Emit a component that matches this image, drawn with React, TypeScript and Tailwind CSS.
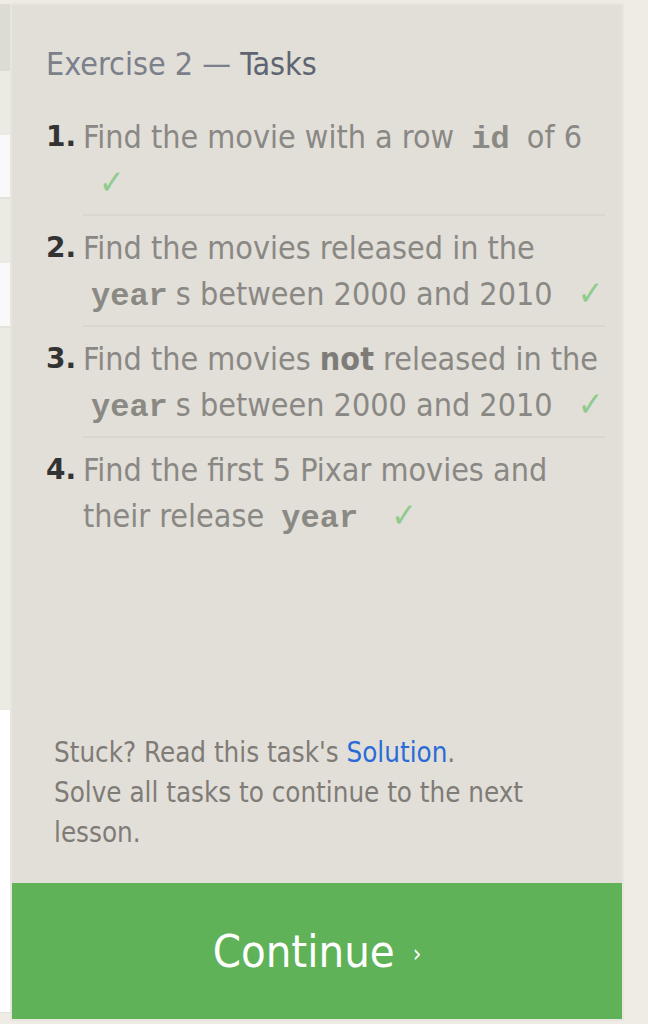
const body = "font-['DejaVu_Sans_Condensed','DejaVu_Sans',sans-serif]";

function Code({ children }: { children: string }) {
  return (
    <code className="px-[8px] font-['Liberation_Mono',monospace] text-[32px] font-bold leading-none text-[#8b8984]">
      {children}
    </code>
  );
}

function Check() {
  return <span className="ml-[16px] text-[34px] leading-none text-[#8fcb8b]">✓</span>;
}

const tasks = [
  <>
    Find the movie with a row <Code>id</Code> of 6 <Check />
  </>,
  <>
    Find the movies released in the <Code>year</Code>s between 2000 and 2010 <Check />
  </>,
  <>
    Find the movies <b className="font-bold text-[#7e7c78]">not</b> released in the <Code>year</Code>s between 2000
    and 2010 <Check />
  </>,
  <>
    Find the first 5 Pixar movies and their release <Code>year</Code> <Check />
  </>,
];

export default function App() {
  return (
    <div className={`flex h-[1024px] w-[648px] overflow-hidden bg-[#efece5] ${body}`}>
      {/* left panel, cut off */}
      <div className="flex w-[10px] shrink-0 flex-col pt-[4px]">
        <div className="h-[67px] bg-[#dcdcd5]" />
        <div className="h-[64px] bg-[#ebebe4]" />
        <div className="h-[64px] border-b-2 border-[#e2e2dc] bg-[#f9f9f9]" />
        <div className="h-[64px] bg-[#ebebe4]" />
        <div className="h-[65px] border-b-2 border-[#e2e2dc] bg-[#f9f9f9]" />
        <div className="h-[382px] bg-[#ebebe4]" />
        <div className="h-[303px] border-b border-[#e2e2dc] bg-white" />
      </div>

      {/* tasks panel */}
      <div className="mt-[3px] flex h-[1018px] w-[614px] shrink-0 flex-col border-2 border-[#e7e5de] bg-[#e1dfd8]">
        <div className="pl-[34px] pr-[17px] pt-[39px]">
          <h2 className="text-[32px] leading-[40px] text-[#7b808b]">
            Exercise 2 — <span className="text-[#5e6571]">Tasks</span>
          </h2>

          <ol className="mt-[21px]">
            {tasks.map((t, i) => (
              <li key={i} className="flex text-[32px] leading-[46px]">
                <span className="w-[37px] shrink-0 pt-[9px] font-['DejaVu_Sans',sans-serif] text-[28px] font-bold text-[#333333]">
                  {i + 1}.
                </span>
                <div
                  className={`flex-1 pb-[8px] pt-[9px] text-[#8a8884] ${
                    i < tasks.length - 1 ? 'border-b-2 border-[#d9d7cd]' : ''
                  }`}
                >
                  {t}
                </div>
              </li>
            ))}
          </ol>
        </div>

        <div className="flex-1" />

        <div className="pb-[31px] pl-[42px] pr-[40px] text-[27.5px] leading-[40px] text-[#7f7b77]">
          <p>
            Stuck? Read this task's <a className="text-[#2b6bd7]">Solution</a>.
          </p>
          <p>Solve all tasks to continue to the next lesson.</p>
        </div>

        <button className="flex h-[136px] w-full shrink-0 items-center justify-center bg-[#5fb258] text-white">
          <span className="text-[45px] leading-none">Continue</span>
          <span className="ml-[18px] mt-[6px] text-[24px] leading-none">›</span>
        </button>
      </div>
    </div>
  );
}
